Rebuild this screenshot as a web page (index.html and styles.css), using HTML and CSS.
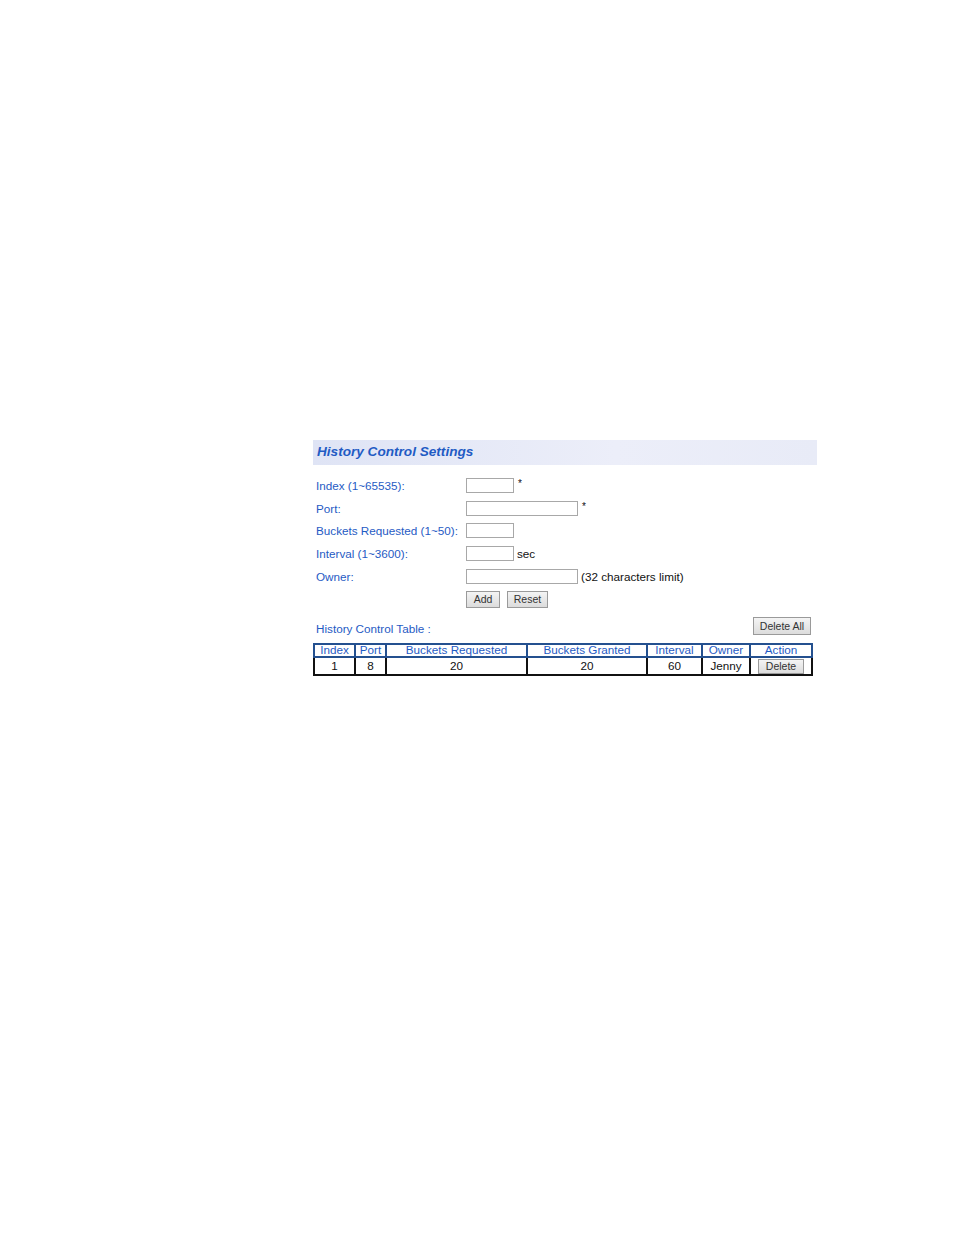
FILE: index.html
```html
<!DOCTYPE html>
<html>
<head>
<meta charset="utf-8">
<link rel="stylesheet" href="styles.css">
</head>
<body>
<div class="page">
  <div class="title-bar"><span class="title">History Control Settings</span></div>
  <div class="form">
    <div class="row"><span class="label">Index (1~65535):</span><span class="input short"></span><span class="note star">*</span></div>
    <div class="row"><span class="label">Port:</span><span class="input long"></span><span class="note star">*</span></div>
    <div class="row"><span class="label">Buckets Requested (1~50):</span><span class="input short"></span></div>
    <div class="row"><span class="label">Interval (1~3600):</span><span class="input short"></span><span class="note">sec</span></div>
    <div class="row"><span class="label">Owner:</span><span class="input long"></span><span class="note">(32 characters limit)</span></div>
    <div class="row buttons"><span class="label"></span><span class="btn add">Add</span><span class="btn reset">Reset</span></div>
  </div>
  <div class="table-head">
    <span class="label">History Control Table :</span>
    <span class="btn delall">Delete All</span>
  </div>
  <table class="tbl">
    <colgroup>
      <col class="c1"><col class="c2"><col class="c3"><col class="c4"><col class="c5"><col class="c6"><col class="c7">
    </colgroup>
    <tr class="hdr">
      <th>Index</th><th>Port</th><th>Buckets Requested</th><th>Buckets Granted</th><th>Interval</th><th>Owner</th><th>Action</th>
    </tr>
    <tr class="data">
      <td>1</td><td>8</td><td>20</td><td>20</td><td>60</td><td>Jenny</td><td><span class="btn del">Delete</span></td>
    </tr>
  </table>
</div>
</body>
</html>
```
FILE: styles.css
```css
html, body { margin: 0; padding: 0; background: #fff; }
body { font-family: "Liberation Sans", Arial, sans-serif; font-size: 11.7px; color: #111; }
.page { margin: 440px 0 0 313px; width: 504px; }
.title-bar { height: 25px; box-sizing: border-box; padding: 0 0 3px 4px; background: linear-gradient(to right, #dfe4f5, #eceef9 60%, #e8ebf7); display: flex; align-items: center; }
.title { color: #1f5bc4; font-weight: bold; font-style: italic; font-size: 13.6px; }
.form { padding-top: 9px; padding-left: 3px; display: flex; flex-direction: column; }
.row { display: flex; align-items: center; height: 22.7px; }
.label { color: #1f5bc4; width: 150px; flex: none; }
.input { height: 13px; border: 1px solid #a8a8a8; background: #fff; box-sizing: content-box; }
.input.short { width: 46px; }
.input.long { width: 110px; }
.note { margin-left: 3px; color: #111; }
.note.star { font-size: 10px; align-self: flex-start; margin-top: 4px; margin-left: 4px; }
.buttons { height: 24px; }
.btn { display: inline-flex; align-items: center; justify-content: center; border: 1px solid #9a9a9a; background: linear-gradient(#f4f4f4, #dcdcdc); color: #333; font-size: 10.5px; height: 15px; box-sizing: border-box; }
.btn.add { width: 34px; height: 17px; }
.btn.reset { width: 41px; height: 17px; margin-left: 7px; }
.table-head { display: flex; justify-content: space-between; align-items: flex-start; padding-left: 3px; width: 495px; margin-top: 6px; height: 26px; }
.table-head .label { margin-top: 5px; width: auto; }
.btn.delall { width: 58px; height: 18px; }
.tbl { border-collapse: collapse; table-layout: fixed; width: 498px; }
.c1 { width: 41px; } .c2 { width: 31px; } .c3 { width: 141px; } .c4 { width: 120px; } .c5 { width: 55px; } .c6 { width: 48px; } .c7 { width: 62px; }
.tbl th { color: #1f5bc4; font-weight: normal; border: 2px solid #24508f; height: 10px; padding: 0 0 1px; line-height: 10px; background: #fff; }
.tbl td { border: 2px solid #111; text-align: center; height: 14px; padding: 0; line-height: 14px; }
.btn.del { width: 46px; height: 15px; vertical-align: middle; }
```
